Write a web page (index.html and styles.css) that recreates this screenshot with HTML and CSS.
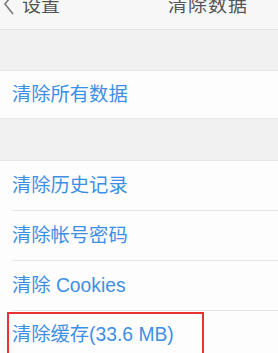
FILE: index.html
```html
<!DOCTYPE html>
<html>
  <head>
    <title>清除数据</title>
    <link rel="stylesheet" href="styles.css">
  </head>
  <body>
  <div class="screen">
    <div class="nav">
      <div class="back">
        <svg class="chevron" width="12" height="20" viewBox="0 0 12 20">
          <path d="M10 -2 L2 8 L10 18" fill="none" stroke="#7a7a7a" stroke-width="1.6"/>
        </svg>
        <span>设置</span>
      </div>
      <div class="nav-title">清除数据</div>
    </div>

    <div class="gap"></div>
    <div class="group">
      <div class="row row-single">清除所有数据</div>
    </div>

    <div class="gap gap-2"></div>
    <div class="group">
      <div class="row">清除历史记录</div>
      <div class="row">清除帐号密码</div>
      <div class="row">清除 Cookies</div>
      <div class="row marked">
        清除缓存(33.6 MB)
        <div class="highlight"></div>
      </div>
    </div>
  </div>
  </body>
</html>
```

FILE: styles.css
```css
body {
  margin: 0;
  background-color: #f1f1f1;
  font-family: "Liberation Sans", "Noto Sans CJK SC", sans-serif;
}
.screen {
  width: 278px;
  height: 353px;
  overflow: hidden;
}
.nav {
  display: flex;
  justify-content: space-between;
  align-items: flex-start;
  height: 29px;
  background-color: #f7f7f7;
  border-bottom: 1px solid #e3e3e3;
  color: #555555;
  font-size: 19px;
  line-height: 19px;
}
.back {
  display: flex;
  align-items: flex-start;
  margin-top: -4px;
  padding-left: 3px;
}
.chevron {
  margin-top: 0px;
  margin-right: 7px;
}
.nav-title {
  margin-top: -4px;
  margin-right: 30px;
  letter-spacing: 1px;
}
.gap {
  height: 40px;
}
.gap-2 {
  height: 41px;
}
.group {
  background-color: #fdfdfd;
  border-top: 1px solid #e6e6e6;
  border-bottom: 1px solid #e6e6e6;
}
.row {
  position: relative;
  margin-left: 12px;
  height: 49px;
  line-height: 49px;
  color: #3d8fe5;
  font-size: 19.3px;
  border-bottom: 1px solid #e6e6e6;
}
.row:last-child {
  border-bottom: none;
  height: 47px;
  line-height: 47px;
}
.row-single {
  line-height: 51px;
}
.highlight {
  position: absolute;
  left: -5px;
  top: 1px;
  width: 193px;
  height: 60px;
  border: 2px solid #e8322f;
}
```
